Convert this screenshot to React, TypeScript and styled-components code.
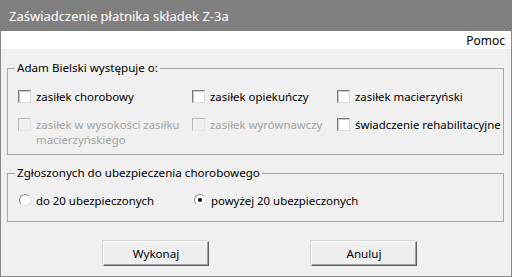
import React from 'react';
import styled, { createGlobalStyle } from 'styled-components';

const Global = createGlobalStyle`
  html, body { margin: 0; padding: 0; background: #f0f0f0; }
  body { font-family: "Noto Sans", "DejaVu Sans", sans-serif; font-size: 11.4px; color: #000; }
`;

const Window = styled.div`
  width: 512px;
  height: 277px;
  box-sizing: border-box;
  border: 1px solid #878787;
  border-top: none;
  display: flex;
  flex-direction: column;
  background: #f0f0f0;
`;

const TitleBar = styled.div`
  height: 31px;
  flex: none;
  background: #7f7f7f;
  color: #fff;
  font-size: 13px;
  display: flex;
  align-items: center;
  margin: 0 -1px;
  padding-left: 9px;
`;

const MenuBar = styled.div`
  height: 18px;
  flex: none;
  background: #fff;
  display: flex;
  align-items: center;
  justify-content: flex-end;
  padding-right: 6px;
  line-height: 15px;
  font-size: 12px;
`;

const Body = styled.div`
  flex: 1;
  display: flex;
  flex-direction: column;
  padding: 12px 7px 0 6px;
`;

const Group = styled.fieldset<{ $h: number; $mt?: number }>`
  margin: ${(p) => p.$mt ?? 0}px 0 0 0;
  padding: 0;
  border: 1px solid #a6a6a6;
  height: ${(p) => p.$h}px;
  box-sizing: border-box;
  min-width: 0;
`;

const Legend = styled.legend`
  margin-left: 7px;
  padding: 0 2px;
  line-height: 14px;
  font-size: 11.6px;
`;

const CheckGrid = styled.div`
  display: grid;
  grid-template-columns: 174px 145px 1fr;
  row-gap: 13px;
  padding: 14px 0 0 10px;
`;

const RadioRow = styled.div`
  display: grid;
  grid-template-columns: 175px 1fr;
  padding: 13px 0 0 11px;
`;

const Item = styled.label<{ $disabled?: boolean }>`
  display: flex;
  align-items: flex-start;
  gap: 5px;
  line-height: 15px;
  white-space: nowrap;
  color: ${(p) => (p.$disabled ? '#a3a3a3' : '#000')};
`;

const Box = styled.span<{ $disabled?: boolean }>`
  flex: none;
  width: 13px;
  height: 13px;
  box-sizing: border-box;
  margin-top: 1px;
  border: 1px solid;
  border-color: ${(p) => (p.$disabled ? '#b8b8b8 #e4e4e4 #e4e4e4 #b8b8b8' : '#7a7a7a #dcdcdc #dcdcdc #7a7a7a')};
  background: ${(p) => (p.$disabled ? '#f0f0f0' : '#fff')};
  box-shadow: ${(p) => (p.$disabled ? 'none' : 'inset 1px 1px 0 #c9c9c9')};
`;

const Radio = styled.span<{ $on?: boolean }>`
  flex: none;
  width: 12px;
  height: 12px;
  box-sizing: border-box;
  margin-top: 1px;
  border-radius: 50%;
  border: 1px solid;
  border-color: #8a8a8a #e6e6e6 #e6e6e6 #8a8a8a;
  background: #fff;
  display: flex;
  align-items: center;
  justify-content: center;
  &::after {
    content: '';
    width: 4px;
    height: 4px;
    border-radius: 50%;
    background: ${(p) => (p.$on ? '#000' : 'transparent')};
  }
`;

const ButtonRow = styled.div`
  display: flex;
  gap: 102px;
  margin: 19px 0 0 96px;
`;

const Button = styled.button`
  width: 106px;
  height: 25px;
  box-sizing: border-box;
  font: inherit;
  font-size: 11.6px;
  color: #000;
  background: #efefef;
  border: 1px solid;
  border-color: #fcfcfc #5f5f5f #5f5f5f #fcfcfc;
  box-shadow: inset -1px -1px 0 #a3a3a3, -1px -1px 0 #d6d6d6;
  padding: 0 0 1px 0;
`;

const Check = ({ label, disabled }: { label: React.ReactNode; disabled?: boolean }) => (
  <Item $disabled={disabled}>
    <Box $disabled={disabled} />
    <span>{label}</span>
  </Item>
);

const RadioItem = ({ label, on }: { label: string; on?: boolean }) => (
  <Item>
    <Radio $on={on} />
    <span>{label}</span>
  </Item>
);

export default function App() {
  return (
    <>
      <Global />
      <Window>
        <TitleBar>Zaświadczenie płatnika składek Z-3a</TitleBar>
        <MenuBar>Pomoc</MenuBar>
        <Body>
          <Group $h={94}>
            <Legend>Adam Bielski występuje o:</Legend>
            <CheckGrid>
              <Check label="zasiłek chorobowy" />
              <Check label="zasiłek opiekuńczy" />
              <Check label="zasiłek macierzyński" />
              <Check
                disabled
                label={
                  <>
                    zasiłek w wysokości zasiłku
                    <br />
                    macierzyńskiego
                  </>
                }
              />
              <Check disabled label="zasiłek wyrównawczy" />
              <Check label="świadczenie rehabilitacyjne" />
            </CheckGrid>
          </Group>
          <Group $h={56} $mt={11}>
            <Legend>Zgłoszonych do ubezpieczenia chorobowego</Legend>
            <RadioRow>
              <RadioItem label="do 20 ubezpieczonych" />
              <RadioItem label="powyżej 20 ubezpieczonych" on />
            </RadioRow>
          </Group>
          <ButtonRow>
            <Button>Wykonaj</Button>
            <Button>Anuluj</Button>
          </ButtonRow>
        </Body>
      </Window>
    </>
  );
}
